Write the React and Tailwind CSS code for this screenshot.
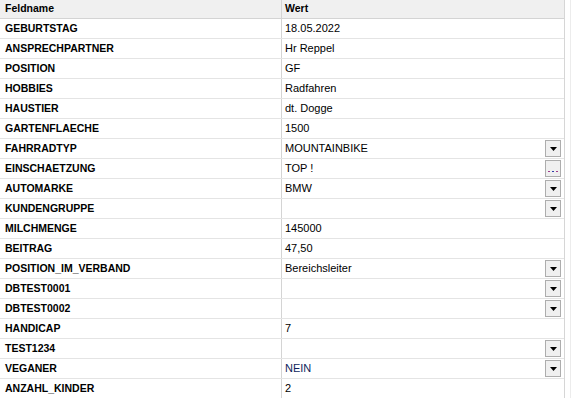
import React from "react";

const rows = [
  { name: "GEBURTSTAG", value: "18.05.2022" },
  { name: "ANSPRECHPARTNER", value: "Hr Reppel" },
  { name: "POSITION", value: "GF" },
  { name: "HOBBIES", value: "Radfahren" },
  { name: "HAUSTIER", value: "dt. Dogge" },
  { name: "GARTENFLAECHE", value: "1500" },
  { name: "FAHRRADTYP", value: "MOUNTAINBIKE", btn: "drop" },
  { name: "EINSCHAETZUNG", value: "TOP !", btn: "dots" },
  { name: "AUTOMARKE", value: "BMW", btn: "drop" },
  { name: "KUNDENGRUPPE", value: "", btn: "drop" },
  { name: "MILCHMENGE", value: "145000" },
  { name: "BEITRAG", value: "47,50" },
  { name: "POSITION_IM_VERBAND", value: "Bereichsleiter", btn: "drop" },
  { name: "DBTEST0001", value: "", btn: "drop" },
  { name: "DBTEST0002", value: "", btn: "drop" },
  { name: "HANDICAP", value: "7" },
  { name: "TEST1234", value: "", btn: "drop" },
  { name: "VEGANER", value: "NEIN", btn: "drop", navy: true },
  { name: "ANZAHL_KINDER", value: "2" },
];

function CellButton({ type }) {
  return (
    <div className="mr-[3px] flex h-[17px] w-[16px] shrink-0 items-center justify-center border border-[#adadad] bg-[#f0f0f0]">
      {type === "drop" ? (
        <svg width="7" height="4" viewBox="0 0 7 4">
          <path d="M0 0h7L3.5 4z" fill="#000" />
        </svg>
      ) : (
        <span className="mt-[5px] flex gap-[2px]">
          <span className="h-[1px] w-[2px] bg-[#a13c8c]" />
          <span className="h-[1px] w-[2px] bg-[#2c3fa8]" />
          <span className="h-[1px] w-[2px] bg-[#a13c8c]" />
        </span>
      )}
    </div>
  );
}

export default function App() {
  return (
    <div
      className="flex h-[398px] w-[573px] overflow-hidden bg-white text-[11px] text-black"
      style={{ fontFamily: '"Liberation Sans", Arial, sans-serif' }}
    >
      <div className="w-[565px] shrink-0 border-r border-[#d6d6d6]">
        {/* header */}
        <div className="flex h-[19px] border-b border-[#d4d4d4] bg-[#f0f0f0] font-bold">
          <div className="flex w-[282px] items-center border-r border-[#d4d4d4] pl-[5px] text-[10.5px]">
            Feldname
          </div>
          <div className="flex flex-1 items-center pl-[3px] text-[10.5px]">
            Wert
          </div>
        </div>

        {rows.map((r) => (
          <div key={r.name} className="flex h-[20px] border-b border-[#e4e4e4]">
            <div className="flex w-[282px] items-center border-r border-[#d4d4d4] pl-[5px] text-[10.5px] font-bold">
              {r.name}
            </div>
            <div className="flex flex-1 items-center justify-between pl-[3px]">
              <span className={r.navy ? "text-[#0f1f5c]" : ""}>{r.value}</span>
              {r.btn && <CellButton type={r.btn} />}
            </div>
          </div>
        ))}
      </div>
      <div className="flex-1 bg-white">
        <div className="ml-[5px] h-full border-l border-[#ececec]" />
      </div>
    </div>
  );
}
